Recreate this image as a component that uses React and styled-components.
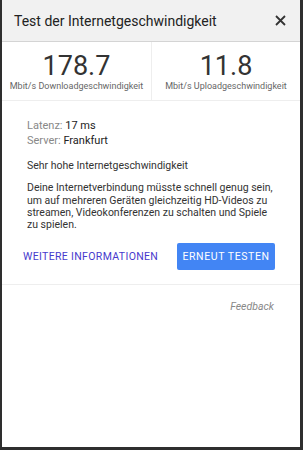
import styled, { createGlobalStyle } from "styled-components";

const GlobalStyle = createGlobalStyle`
  html, body {
    margin: 0;
    padding: 0;
    background-color: #2e2e2e;
    font-family: Roboto, "Liberation Sans", Arial, sans-serif;
  }
`;

const Panel = styled.section`
  background-color: #fff;
  display: flex;
  flex-direction: column;
  height: 447px;
  margin-left: 2px;
  width: 298px;
`;

const Header = styled.header`
  align-items: center;
  background-color: #f1f1f1;
  border-bottom: 1px solid #d4d4d4;
  box-sizing: border-box;
  display: flex;
  height: 42px;
  justify-content: space-between;
  padding: 0 14px 0 12px;
`;

const Title = styled.h1`
  color: #222;
  font-size: 14px;
  font-weight: 400;
  margin: 0;
`;

const CloseButton = styled.button`
  background: none;
  border: none;
  display: flex;
  padding: 0;
  &:hover {
    cursor: pointer;
  }
`;

const Stats = styled.div`
  border-bottom: 1px solid #eee;
  display: grid;
  grid-template-columns: 1fr 1fr;
`;

const Stat = styled.div`
  align-items: center;
  border-left: ${(p) => (p.$divided ? "1px solid #eee" : "none")};
  box-sizing: border-box;
  display: flex;
  flex-direction: column;
  height: 58px;
  padding-top: 11px;
`;

const Value = styled.span`
  color: #333;
  font-size: 27px;
  line-height: 27px;
`;

const Unit = styled.span`
  color: #666;
  font-size: 9px;
  margin-top: 1px;
`;

const Body = styled.div`
  padding: 18px 25px 0;
`;

const Meta = styled.div`
  color: #222;
  font-size: 11px;
  line-height: 14.5px;
`;

const MetaLabel = styled.span`
  color: #888;
`;

const Text = styled.p`
  color: #333;
  font-size: 10.5px;
  line-height: 12.3px;
  margin: ${(p) => p.$gap || "0"};
`;

const Actions = styled.div`
  align-items: center;
  border-bottom: 1px solid #eee;
  display: flex;
  justify-content: space-between;
  padding: 12px 25px 14px 19px;
`;

const LinkButton = styled.button`
  background: none;
  border: none;
  color: #4739cd;
  font-family: inherit;
  font-size: 10.5px;
  font-weight: 400;
  letter-spacing: 0.35px;
  padding: 0 2px;
  &:hover {
    cursor: pointer;
  }
`;

const PrimaryButton = styled.button`
  background-color: #4285f4;
  border: none;
  border-radius: 2px;
  color: #fff;
  font-family: inherit;
  font-size: 10.5px;
  font-weight: 400;
  height: 27px;
  letter-spacing: 0.6px;
  padding: 0 4px;
  white-space: nowrap;
  width: 98px;
  &:hover {
    cursor: pointer;
  }
`;

const Footer = styled.div`
  display: flex;
  justify-content: flex-end;
  padding: 15px 26px;
`;

const FeedbackLink = styled.a`
  color: #888;
  font-size: 10.5px;
  font-style: italic;
`;

export default function App() {
  return (
    <>
      <GlobalStyle />
      <Panel>
        <Header>
          <Title>Test der Internetgeschwindigkeit</Title>
          <CloseButton aria-label="Schließen">
            <svg width="11" height="11" viewBox="0 0 11 11">
              <path d="M1 1 L10 10 M10 1 L1 10" stroke="#333" strokeWidth="1.8" />
            </svg>
          </CloseButton>
        </Header>
        <Stats>
          <Stat>
            <Value>178.7</Value>
            <Unit>Mbit/s Downloadgeschwindigkeit</Unit>
          </Stat>
          <Stat $divided>
            <Value>11.8</Value>
            <Unit>Mbit/s Uploadgeschwindigkeit</Unit>
          </Stat>
        </Stats>
        <Body>
          <Meta>
            <MetaLabel>Latenz:</MetaLabel> 17 ms
          </Meta>
          <Meta>
            <MetaLabel>Server:</MetaLabel> Frankfurt
          </Meta>
          <Text $gap="12px 0 0">Sehr hohe Internetgeschwindigkeit</Text>
          <Text $gap="10px 0 0">
            Deine Internetverbindung müsste schnell genug sein, um auf mehreren
            Geräten gleichzeitig HD-Videos zu streamen, Videokonferenzen zu
            schalten und Spiele zu spielen.
          </Text>
        </Body>
        <Actions>
          <LinkButton>WEITERE INFORMATIONEN</LinkButton>
          <PrimaryButton>ERNEUT TESTEN</PrimaryButton>
        </Actions>
        <Footer>
          <FeedbackLink>Feedback</FeedbackLink>
        </Footer>
      </Panel>
    </>
  );
}
